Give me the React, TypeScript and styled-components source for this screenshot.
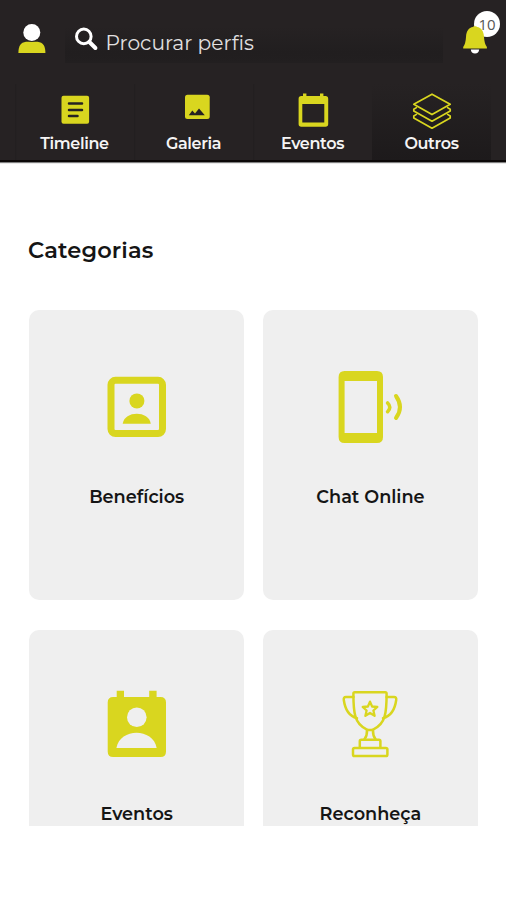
import React from "react";
import styled, { createGlobalStyle } from "styled-components";

const LIME = "#d9d61f";
const INK = "#262223";

const GlobalStyle = createGlobalStyle`
  *, *::before, *::after { box-sizing: border-box; }
  html, body { margin: 0; background: #fff; }
  body { font-family: Montserrat, Inter, "Open Sans", sans-serif; color: #151515; }
  svg { display: block; flex: none; }
`;

const Screen = styled.div`
  width: 506px;
  height: 900px;
  overflow: hidden;
  background: #fff;
`;

const Header = styled.header`
  height: 162px;
  background: ${INK};
  border-bottom: 2px solid #0b0808;
  box-shadow: 0 1px 1px rgba(0, 0, 0, 0.5);
`;

const TopBar = styled.div`
  display: flex;
  height: 84px;
  padding: 0 6px 0 16px;
`;

const Avatar = styled.button`
  width: 32px;
  height: 36px;
  margin-top: 21px;
  padding: 0;
  border: 0;
  background: none;
`;

const SearchBox = styled.label`
  display: flex;
  width: 378px;
  height: 40px;
  margin: 23px 0 0 17px;
  padding-left: 9px;
  background: linear-gradient(${INK} 10%, #211e1f 75%, #221f20);
`;

const SearchText = styled.span`
  margin: 5px 0 0 5.5px;
  font-size: 20.2px;
  line-height: 30px;
  white-space: nowrap;
  color: #e2e0e1;
`;

const Bell = styled.button`
  position: relative;
  width: 40px;
  height: 46px;
  margin: 10px 0 0 17px;
  padding: 0;
  border: 0;
  background: none;
`;

const BellShape = styled.span`
  position: relative;
  display: block;
`;

const Badge = styled.span`
  position: absolute;
  top: 1px;
  left: 14px;
  width: 26px;
  height: 26px;
  border-radius: 50%;
  background: #fff;
  color: #555;
  font: 400 15px/26px "Open Sans", sans-serif;
  text-align: center;
`;

const Tabs = styled.nav`
  display: flex;
  padding-left: 15px;
  height: 76px;
`;

const Tab = styled.a<{ $active?: boolean }>`
  display: flex;
  flex-direction: column;
  align-items: center;
  width: 119px;
  padding-top: 6px;
  background: ${(p) =>
    p.$active
      ? `linear-gradient(${INK}, #1d1a1b)`
      : `linear-gradient(to right, #211e1f, ${INK} 2px)`};
`;

const TabLabel = styled.span`
  margin-top: 4px;
  font-size: 16px;
  font-weight: 600;
  line-height: 20px;
  letter-spacing: -0.35px;
  color: #f5f4f4;
`;

const Heading = styled.h1`
  margin: 72px 0 0 28px;
  font-size: 22.5px;
  font-weight: 600;
  line-height: 32px;
  letter-spacing: 0.15px;
`;

const Viewport = styled.main`
  height: 517px;
  margin-top: 43px;
  overflow: hidden;
`;

const Grid = styled.div`
  display: grid;
  grid-template-columns: 214.6px 214.6px;
  grid-auto-rows: 290px;
  gap: 30.5px 19.2px;
  padding: 0.5px 0 0 29.4px;
`;

const Card = styled.article`
  display: flex;
  flex-direction: column;
  align-items: center;
  padding-top: 52px;
  border-radius: 10px;
  background: #efefef;
`;

const CardLabel = styled.span<{ $drop: number }>`
  margin-top: ${(p) => p.$drop}px;
  font-size: 17.7px;
  font-weight: 600;
  line-height: 26px;
`;

const UserIcon = () => (
  <svg width="32" height="36">
    <path d="M2.4 32C2.4 25 4.6 21.4 10 20.7H21.6C27.2 21.4 29.4 25 29.4 32Z" fill={LIME} />
    <circle cx="15.8" cy="11.5" r="9.3" fill={INK} />
    <circle cx="15.8" cy="11.5" r="8.5" fill="#fff" />
  </svg>
);

const SearchIcon = () => (
  <svg width="26" height="34" fill="none" stroke="#fff">
    <circle cx="9.8" cy="13.4" r="7.3" strokeWidth="3" />
    <path d="M15.4 19L21.4 25" strokeWidth="4" strokeLinecap="round" />
  </svg>
);

const BellIcon = () => (
  <svg width="40" height="46">
    <path d="M10.8 39.5H19.2Q18.8 43.6 15 43.6Q11.2 43.6 10.8 39.5Z" fill="#fff" />
    <path d="M3.2 38.5V37Q5.6 34 6 27C6.2 21 9 17.5 12.8 17C13.3 16 16.7 16 17.2 17C21 17.5 23.8 21 24 27Q24.4 34 26.9 37V38.5Z" fill={LIME} />
  </svg>
);

const TimelineIcon = () => (
  <svg width="44" height="40">
    <rect x="8.5" y="5.7" width="27.6" height="28" rx="2" fill={LIME} />
    <path d="M16 13.6H29M16 19.9H29M16 26H24.5" stroke={INK} strokeWidth="2.5" strokeLinecap="round" />
  </svg>
);

const GalleryIcon = () => (
  <svg width="44" height="40">
    <rect x="13" y="4.8" width="24.7" height="24.3" rx="2.5" fill={LIME} />
    <path d="M16.8 25.2L20.3 20.6L23 23.4L27 18.4L32.8 25.2Z" fill={INK} />
  </svg>
);

const CalendarIcon = () => (
  <svg width="44" height="40">
    <path
      fillRule="evenodd"
      fill={LIME}
      d="M12 6V3.4H15.4V6H29V3.4H32.4V6H34.5Q37.2 6 37.2 8.7V34Q37.2 36.7 34.5 36.7H10.3Q7.6 36.7 7.6 34V8.7Q7.6 6 10.3 6ZM11.3 14V32.5H33.3V14Z"
    />
  </svg>
);

const LayersIcon = () => (
  <svg width="44" height="40" fill="none" stroke={LIME} strokeWidth="1.7" strokeLinejoin="round" strokeLinecap="round">
    <path d="M22 4.2L40.2 14.3L22 24.6L3.8 14.3Z" />
    <path d="M6.4 17.6L3.8 19.2V21L22 31.2L40.2 21V19.2L37.6 17.6" />
    <path d="M6.4 24.4L3.8 26V28L22 38.2L40.2 28V26L37.6 24.4" />
  </svg>
);

const BenefitsIcon = () => (
  <svg width="90" height="90" fill={LIME}>
    <rect x="19" y="18.3" width="51.5" height="53.2" rx="4.5" fill="none" stroke={LIME} strokeWidth="7" />
    <circle cx="44.9" cy="38.9" r="7.5" />
    <path d="M30.7 61.7C32.5 48.4 57 48.4 58.8 61.7Z" />
  </svg>
);

const ChatIcon = () => (
  <svg width="90" height="90">
    <path
      fillRule="evenodd"
      fill={LIME}
      d="M19.6 9H52Q58 9 58 15V75Q58 81 52 81H19.6Q13.6 81 13.6 75V15Q13.6 9 19.6 9ZM19.6 19V71H52V19Z"
    />
    <g fill="none" stroke={LIME} strokeLinecap="round">
      <path d="M62.6 41Q67 45.3 62.6 49.7" strokeWidth="3.6" />
      <path d="M71 34Q79 45.3 71 56" strokeWidth="4" />
    </g>
  </svg>
);

const EventsIcon = () => (
  <svg width="90" height="90">
    <path
      fill={LIME}
      d="M24.7 15V8.8H32V15H57.2V8.8H64.6V15H68.5Q74 15 74 20.5V69.5Q74 75 68.5 75H21.2Q15.7 75 15.7 69.5V20.5Q15.7 15 21.2 15Z"
    />
    <circle cx="44.8" cy="35.3" r="9.8" fill="#efefef" />
    <path d="M24.4 66C28 45.7 61 45.7 64.7 66Z" fill="#efefef" />
  </svg>
);

const TrophyIcon = () => (
  <svg width="90" height="90" fill="none" stroke={LIME} strokeWidth="2.5" strokeLinejoin="round" strokeLinecap="round">
    <path d="M29.8 10.2H60.2Q61.6 10.2 61.6 11.6C61.6 31 60.5 42 48.5 47.3Q45 48.8 41.5 47.3C29.5 42 28.4 31 28.4 11.6Q28.4 10.2 29.8 10.2Z" />
    <path d="M28.4 15H21Q18.3 15 18.8 18C20 27 24.5 34.2 32 36.2M61.6 15H69Q71.7 15 71.2 18C70 27 65.5 34.2 58 36.2" />
    <path d="M42 48.3Q42.3 53.5 39.3 57.6M48 48.3Q47.7 53.5 50.7 57.6" />
    <path d="M34.8 65.8V59.2Q34.8 57.7 36.3 57.7H53.9Q55.4 57.7 55.4 59.2V65.8" />
    <rect x="28" y="66" width="34.4" height="8" rx="1.6" />
    <path strokeWidth="2.3" d="M45 19.6L47.1 24.5L52.3 25L48.4 28.5L49.6 33.8L45 31L40.4 33.8L41.6 28.5L37.7 25L42.9 24.5Z" />
  </svg>
);

const tabs = [
  { label: "Timeline", icon: <TimelineIcon /> },
  { label: "Galeria", icon: <GalleryIcon /> },
  { label: "Eventos", icon: <CalendarIcon /> },
  { label: "Outros", icon: <LayersIcon />, active: true },
];

const categories = [
  { label: "Benefícios", icon: <BenefitsIcon />, drop: 32 },
  { label: "Chat Online", icon: <ChatIcon />, drop: 32 },
  { label: "Eventos", icon: <EventsIcon />, drop: 29 },
  { label: "Reconheça", icon: <TrophyIcon />, drop: 29 },
];

export default function App() {
  return (
    <Screen>
      <GlobalStyle />
      <Header>
        <TopBar>
          <Avatar><UserIcon /></Avatar>
          <SearchBox>
            <SearchIcon />
            <SearchText>Procurar perfis</SearchText>
          </SearchBox>
          <Bell>
            <Badge>10</Badge>
            <BellShape><BellIcon /></BellShape>
          </Bell>
        </TopBar>
        <Tabs>
          {tabs.map((t) => (
            <Tab key={t.label} $active={t.active}>
              {t.icon}
              <TabLabel>{t.label}</TabLabel>
            </Tab>
          ))}
        </Tabs>
      </Header>
      <Heading>Categorias</Heading>
      <Viewport>
        <Grid>
          {categories.map((c) => (
            <Card key={c.label}>
              {c.icon}
              <CardLabel $drop={c.drop}>{c.label}</CardLabel>
            </Card>
          ))}
        </Grid>
      </Viewport>
    </Screen>
  );
}
